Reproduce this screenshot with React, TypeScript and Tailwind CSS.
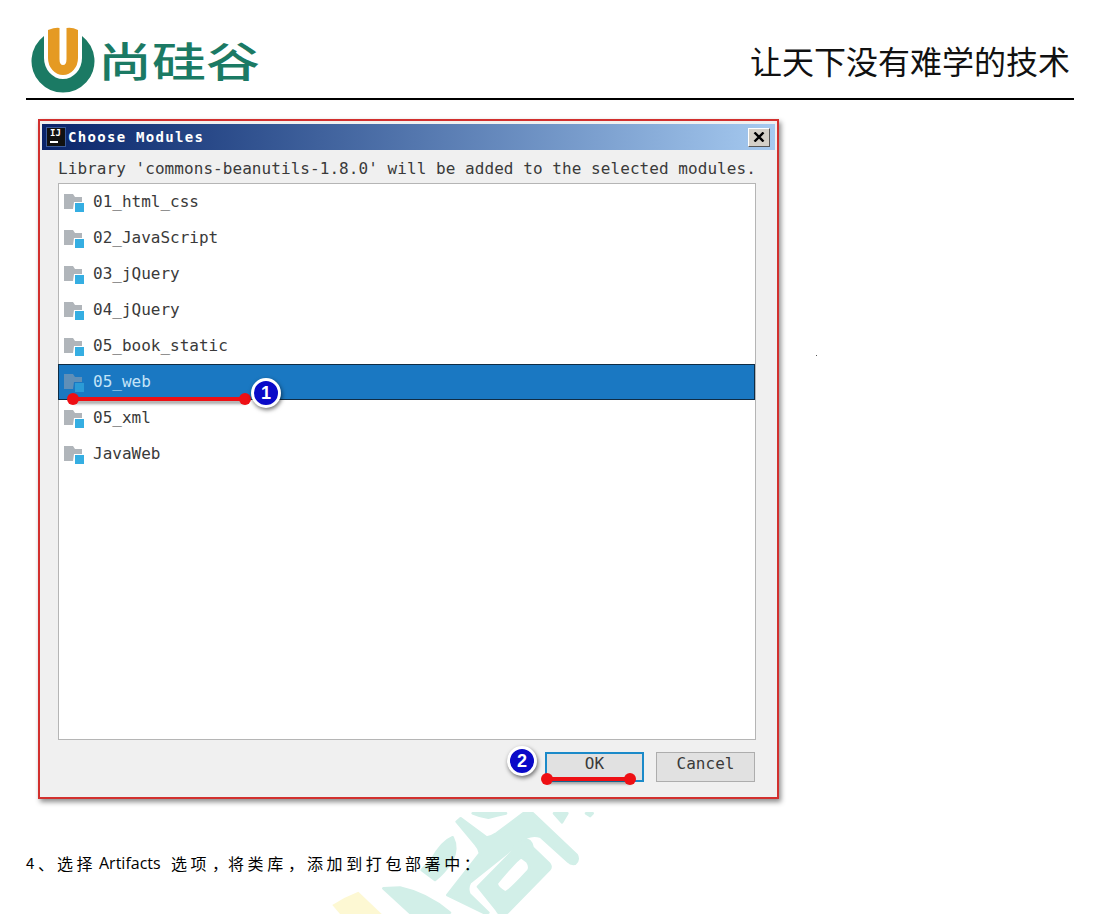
import React from 'react';

const modules = ['01_html_css', '02_JavaScript', '03_jQuery', '04_jQuery', '05_book_static', '05_web', '05_xml', 'JavaWeb'];

function FolderIcon({ selected }: { selected?: boolean }) {
  return (
    <svg width="22" height="22" viewBox="0 0 22 22" className="shrink-0">
      <path d="M1 3h9l2 3h7v12H1z" fill={selected ? '#5f8fb8' : '#b0b5ba'} />
      <rect x="12" y="12" width="9" height="9" fill={selected ? '#2b9bd6' : '#35aee2'} />
      <path d="M10 18h2v-6h7v-1h-8z" fill={selected ? '#1a78c2' : '#fff'} />
    </svg>
  );
}

function Badge({ n }: { n: number }) {
  return (
    <div className="absolute w-[30px] h-[30px] rounded-full bg-[#0a0ac8] border-[3px] border-white shadow-[1px_2px_4px_rgba(0,0,0,0.55)] flex items-center justify-center text-white text-[18px] font-bold font-['Liberation_Sans',sans-serif] z-10"
      style={n === 1 ? { left: 211, top: 257 } : { left: 467, top: 625 }}>
      {n}
    </div>
  );
}

function RedLine({ className }: { className: string }) {
  return (
    <div className={`absolute h-[4px] bg-[#ee0f14] shadow-[1px_3px_3px_rgba(0,0,0,0.35)] ${className}`}>
      <span className="absolute -left-[6px] -top-[4px] w-3 h-3 rounded-full bg-[#ee0f14]" />
      <span className="absolute -right-[6px] -top-[4px] w-3 h-3 rounded-full bg-[#ee0f14]" />
    </div>
  );
}

function Logo() {
  return (
    <div className="flex items-center">
      <svg width="66" height="68" viewBox="0 0 66 68" className="shrink-0">
        <path d="M14 10A31.5 31.5 0 1 0 52 10V32A19 21 0 0 1 14 32Z" fill="#1b7a64" />
        <path d="M18 4Q26 1 29.5 2V33Q29.5 39 33 39Q36.5 39 36.5 33V2Q42 1 48 4V32A15 17 0 0 1 18 32Z" fill="#e59a23" />
      </svg>
      <div className="ml-[2px] w-[162px] text-[54px] leading-none font-medium text-[#1b7a64] tracking-[0px] scale-y-[0.76] font-['Noto_Sans_CJK_SC',sans-serif] whitespace-nowrap">
        尚硅谷
      </div>
    </div>
  );
}

// traced from the faint page watermark, coordinates are at 3x
function Watermark() {
  return (
    <svg width="290" height="109" viewBox="0 0 870 327" className="absolute left-[320px] top-[805px]">
      <g fill="#d2efe8" stroke="#d2efe8" strokeWidth="8" strokeLinejoin="round">
        <path d="M190 250L240 248Q320 265 390 323H270Z" />
        <path d="M335 165Q365 110 398 97Q415 130 395 170Q370 205 345 225L305 195Z" />
        <path d="M410 50L422 40L500 98Q515 95 530 85L610 25H638L770 150Q778 165 765 176Q752 178 745 170L662 95Q640 88 620 97L450 232Q440 250 448 268L505 323H490L382 270L480 145Q478 130 468 120Z" />
        <path d="M474 245L612 105Q632 100 638 128L688 176Q695 186 688 194L562 323H535L530 315ZM530 235Q530 248 555 262Q565 262 625 197Q632 185 622 170L605 157Q595 157 530 235Z" fillRule="evenodd" />
        <path d="M458 25H558Q530 30 505 38Q480 35 458 25Z" />
        <path d="M702 25H742L726 52Z" />
        <path d="M798 25H818L810 33Z" />
      </g>
      <path d="M37 300Q75 275 115 260L185 327H60Z" fill="#fdf8d3" />
    </svg>
  );
}

export default function App() {
  return (
    <div className="relative w-[1100px] h-[914px] overflow-hidden bg-white text-black">
      <Watermark />

      <header className="relative mx-[26px] h-[100px] border-b-2 border-black flex items-end justify-between pb-[4px]">
        <div className="ml-[4px]"><Logo /></div>
        <div className="mb-[18px] mr-[4px] text-[32px] leading-none font-['Noto_Sans_CJK_SC',sans-serif] text-[#111]">让天下没有难学的技术</div>
      </header>

      <span className="absolute left-[816px] top-[355px] w-px h-px bg-[#555]" />

      <div className="relative ml-[38px] mt-[19px] w-[741px] h-[680px] border-2 border-[#d2302e] bg-[#f0f0f0] shadow-[2px_3px_5px_rgba(0,0,0,0.45)] p-[2px] pt-[3px] flex flex-col font-['DejaVu_Sans_Mono',monospace] text-[#3a3a3a]">
        <div className="h-[26px] shrink-0 flex items-center bg-gradient-to-r from-[#0a246a] to-[#a6caf0] pl-[4px] pr-[5px]">
          <div className="w-[20px] h-[20px] bg-[#111] border border-[#3a5a9a] text-white text-[9px] font-bold leading-[11px] pl-[3px] shrink-0">
            IJ
            <div className="w-[8px] h-[2px] bg-white mt-[2px]" />
          </div>
          <div className="ml-[2px] text-white font-bold text-[14px] tracking-[1.3px] whitespace-nowrap">Choose Modules</div>
          <div className="ml-auto w-[22px] h-[19px] bg-[#d4d0c8] border-r border-b border-[#555] border-t-white border-l-white border-t border-l flex items-center justify-center">
            <svg width="12" height="10" viewBox="0 0 12 10"><path d="M1.5 0.5L10.5 9.5M10.5 0.5L1.5 9.5" stroke="#000" strokeWidth="2.4" /></svg>
          </div>
        </div>

        <div className="h-[33px] pl-[16px] pt-[5px] flex items-center text-[16px] tracking-[0.06px] whitespace-nowrap">
          Library 'commons-beanutils-1.8.0' will be added to the selected modules.
        </div>

        <div className="ml-[16px] w-[698px] h-[557px] bg-white border border-[#b5b5b5]">
          {modules.map((m) => {
            const selected = m === '05_web';
            return (
              <div key={m} className={`h-[36px] flex items-center pl-[4px] box-border text-[16px] ${selected ? 'bg-[#1a78c2] border border-[#0f2c44] -ml-px w-[697px] text-[#c4e4f8]' : ''}`}>
                <FolderIcon selected={selected} />
                <span className="ml-[8px] whitespace-pre">{m}</span>
              </div>
            );
          })}
        </div>

        <div className="flex justify-end gap-[12px] pt-[12px] pr-[20px] text-[16px]">
          <div className="w-[99px] h-[30px] border-2 border-[#1b8ac9] bg-[#e1e1e1] flex items-center justify-center pb-[6px]">OK</div>
          <div className="w-[99px] h-[30px] border border-[#adadad] bg-[#e1e1e1] flex items-center justify-center pb-[6px]">Cancel</div>
        </div>

        <RedLine className="left-[33px] top-[276px] w-[172px]" />
        <RedLine className="left-[507px] top-[656px] w-[83px]" />
        <Badge n={1} />
        <Badge n={2} />
      </div>

      <p className="absolute left-[26px] top-[852px] flex items-center h-[22px] text-[16px] font-['Noto_Sans_CJK_SC',sans-serif] whitespace-pre">
        <span className="w-[12px] text-[15px]">4</span>
        <span className="w-[19px]">、</span>
        <span className="tracking-[3.6px] w-[42px]">选择</span>
        <span className="font-['Open_Sans',sans-serif] w-[72px]">Artifacts</span>
        <span className="tracking-[3.6px] w-[41px]">选项</span>
        <span className="w-[16px]">，</span>
        <span className="tracking-[3.6px] w-[60px]">将类库</span>
        <span className="w-[19px]">，</span>
        <span className="tracking-[3.6px]">添加到打包部署中：</span>
      </p>
    </div>
  );
}
